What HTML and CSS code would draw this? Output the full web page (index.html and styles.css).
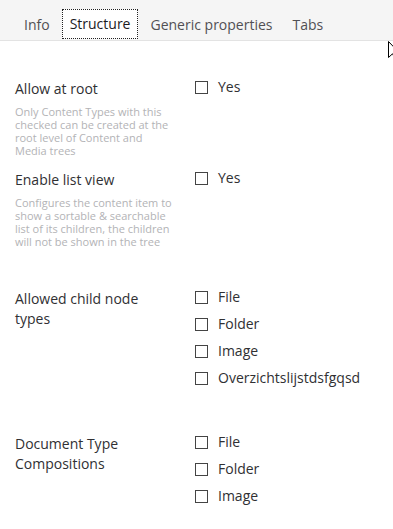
FILE: index.html
```html
<!DOCTYPE html>
<html lang="en">
<head>
<meta charset="UTF-8" />
<title>Document type - Structure</title>
<link rel="stylesheet" href="styles.css">
</head>
<body>

<div class="tabs">
  <a class="tab">Info</a>
  <a class="tab active">Structure</a>
  <a class="tab">Generic properties</a>
  <a class="tab">Tabs</a>
</div>

<div class="content">
  <div class="row">
    <div class="label">
      <div class="title">Allow at root</div>
      <div class="desc">Only Content Types with this checked can be created at the root level of Content and Media trees</div>
    </div>
    <div class="controls">
      <label class="check"><span class="box"></span>Yes</label>
    </div>
  </div>

  <div class="row">
    <div class="label">
      <div class="title">Enable list view</div>
      <div class="desc">Configures the content item to show a sortable &amp; searchable list of its children, the children will not be shown in the tree</div>
    </div>
    <div class="controls">
      <label class="check"><span class="box"></span>Yes</label>
    </div>
  </div>

  <div class="row group">
    <div class="label">
      <div class="title">Allowed child node types</div>
    </div>
    <div class="controls">
      <label class="check"><span class="box"></span>File</label>
      <label class="check"><span class="box"></span>Folder</label>
      <label class="check"><span class="box"></span>Image</label>
      <label class="check"><span class="box"></span>Overzichtslijstdsfgqsd</label>
    </div>
  </div>

  <div class="row group">
    <div class="label">
      <div class="title">Document Type Compositions</div>
    </div>
    <div class="controls">
      <label class="check"><span class="box"></span>File</label>
      <label class="check"><span class="box"></span>Folder</label>
      <label class="check"><span class="box"></span>Image</label>
    </div>
  </div>
</div>

<!-- mouse pointer, partly off screen -->
<svg class="cursor" width="12" height="19" viewBox="0 0 12 19">
  <path d="M0.5 0.5 L0.5 16.5 L4.5 12.8 L7.5 18.5 L9.5 17.5 L6.8 12 L11.5 12 Z" fill="#fff" stroke="#000" stroke-width="1"/>
</svg>

</body>
</html>
```

FILE: styles.css
```css
body { margin: 0; font-family: "Open Sans", "Noto Sans", sans-serif; font-size: 14px; color: #303033; background: #fff; }

.tabs { display: flex; height: 40px; padding-left: 16px; background: #f5f5f5; border-bottom: 1px solid #e3e3e3; align-items: flex-end; }
.tab { padding: 4px 7px; margin-right: 4px; line-height: 20px; color: #515054; border: 1px solid transparent; border-bottom: 0; margin-bottom: 1px; }
.tab.active { background: #fff; color: #1b1b1f; border: 1px dotted #222; }

.content { padding-top: 38px; }
.row { display: flex; margin-bottom: 13px; }
.row.group { margin-top: 41px; }
.row.group + .row.group { margin-top: 48px; }

.label { width: 160px; padding-left: 15px; flex-shrink: 0; }
.title { line-height: 20px; }
.desc { margin-top: 6px; font-size: 11px; line-height: 13px; color: #b3b3b6; }

.controls { padding-left: 20px; display: flex; flex-direction: column; }
.check { display: flex; align-items: flex-start; line-height: 16px; margin-bottom: 11px; }
.check:last-child { margin-bottom: 0; }
.box { width: 11px; height: 11px; border: 1px solid #444; margin-top: 2px; margin-right: 10px; background: #fff; }

.cursor { position: absolute; left: 388px; top: 41px; }
```
